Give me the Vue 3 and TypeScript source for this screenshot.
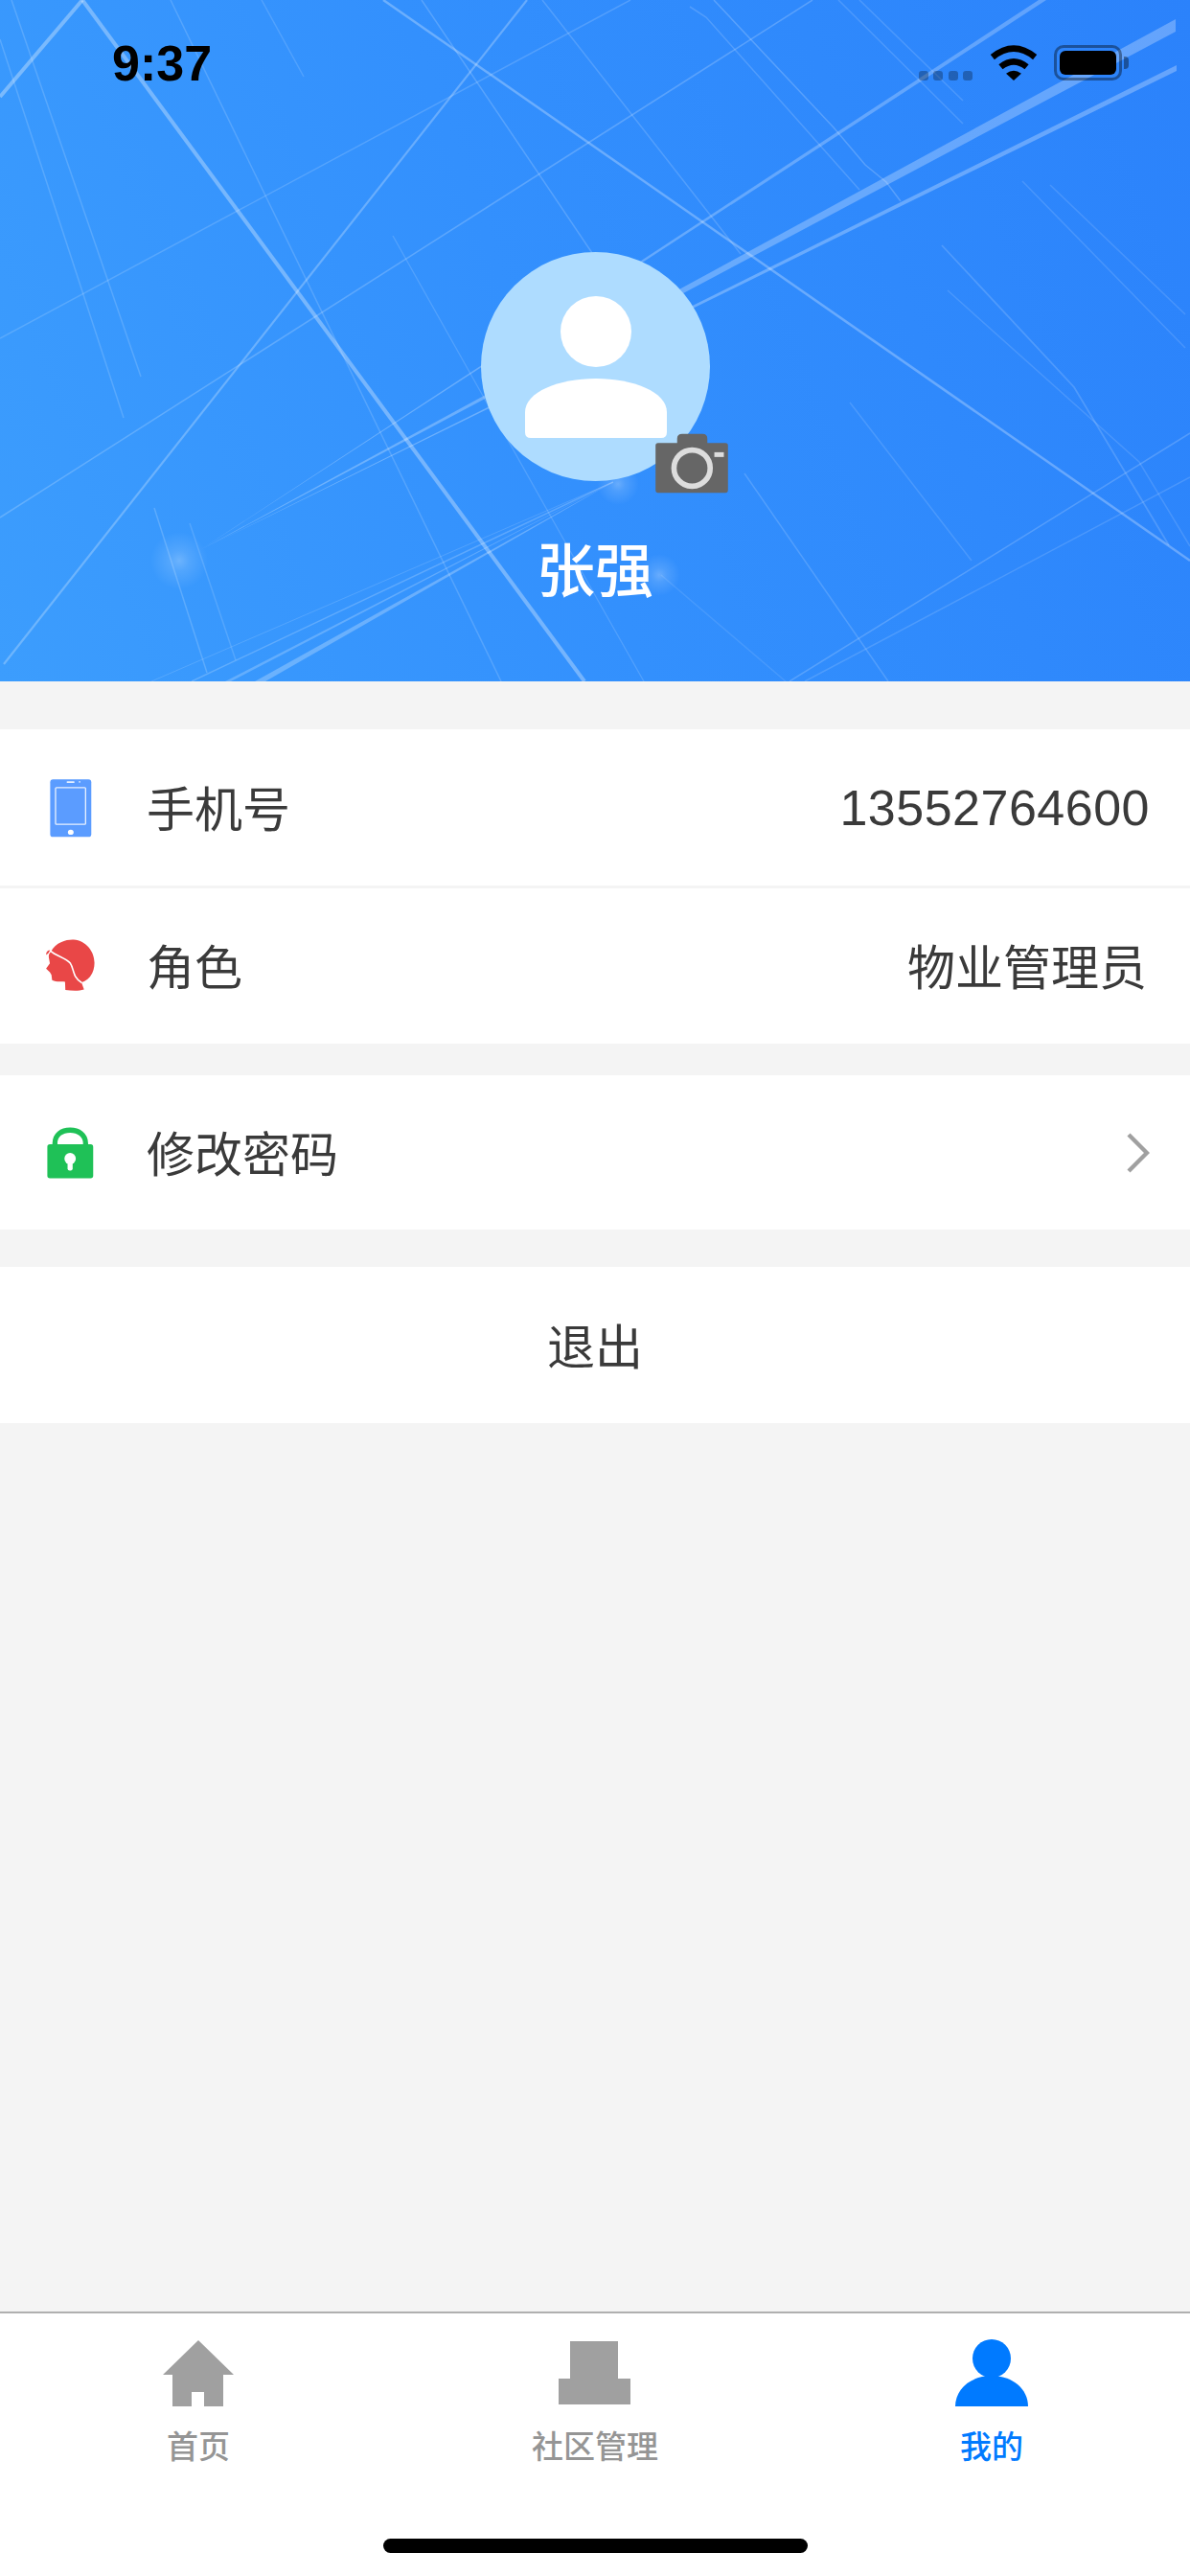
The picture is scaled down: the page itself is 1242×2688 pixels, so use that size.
<script setup lang="ts">
interface Streak {
  d: string;
  w: number;
  o: number;
}

interface Wedge {
  d: string;
  o: number;
}

interface Tab {
  label: string;
  active?: boolean;
}

// background streaks of the header picture, in page pixels
const streaks: Streak[] = [
  { d: "M86 0L610 711", w: 4, o: 0.32 },
  { d: "M86 0L0 101", w: 4, o: 0.33 },
  { d: "M0 353L658 0", w: 1.5, o: 0.16 },
  { d: "M400 0L1242 585", w: 2.5, o: 0.28 },
  { d: "M550 0L4 693", w: 2.2, o: 0.26 },
  { d: "M0 540L848 0", w: 1.5, o: 0.2 },
  { d: "M640 503L158 711", w: 1, o: 0.14 },
  { d: "M640 503L200 711", w: 1.5, o: 0.2 },
  { d: "M0 41L129 436", w: 1.5, o: 0.16 },
  { d: "M12 0L147 393", w: 1.5, o: 0.16 },
  { d: "M178 0L523 711", w: 1.5, o: 0.16 },
  { d: "M273 0L317 80", w: 1.5, o: 0.14 },
  { d: "M440 0L618 264", w: 1.5, o: 0.18 },
  { d: "M566 0L773 265", w: 1.5, o: 0.16 },
  { d: "M745 0L870 133L903 172L925 190L940 210", w: 1.5, o: 0.2 },
  { d: "M720 7L737 18L897 198", w: 1.5, o: 0.16 },
  { d: "M875 0L1005 129", w: 1.5, o: 0.14 },
  { d: "M897 0L1005 105", w: 1.5, o: 0.14 },
  { d: "M1067 189L1237 363", w: 1.5, o: 0.13 },
  { d: "M1096 193L1237 328", w: 1.5, o: 0.13 },
  { d: "M983 256L1121 404L1220 569", w: 1.8, o: 0.16 },
  { d: "M989 303L1189 482L1242 570", w: 1.5, o: 0.13 },
  { d: "M887 420L1014 585", w: 1.5, o: 0.13 },
  { d: "M777 494L927 711", w: 1.5, o: 0.16 },
  { d: "M410 246L630 637L672 711", w: 1.3, o: 0.15 },
  { d: "M161 530L216 702", w: 1.5, o: 0.18 },
  { d: "M198 546L246 689", w: 1.5, o: 0.14 },
  { d: "M1242 452L824 711", w: 1.5, o: 0.18 },
  { d: "M1242 498L840 711", w: 1.5, o: 0.14 },
  { d: "M690 600L820 711", w: 1.5, o: 0.1 },
];

// the streaks that widen away from a glow
const wedges: Wedge[] = [
  { d: "M207 575L1227 20V33Z", o: 0.27 },
  { d: "M213 572L1228 68V74Z", o: 0.28 },
  { d: "M207 575L1084 0H1092Z", o: 0.25 },
  { d: "M640 503L266 711H277Z", o: 0.26 },
  { d: "M640 503L235 711H241Z", o: 0.22 },
];

const tabs: Tab[] = [
  { label: "首页" },
  { label: "社区管理" },
  { label: "我的", active: true },
];
</script>

<template>
  <div class="page">
    <header class="hero">
      <svg class="streaks" viewBox="0 0 1242 711" preserveAspectRatio="none">
        <defs>
          <radialGradient id="glow">
            <stop offset="0" stop-color="#fff" stop-opacity="0.26" />
            <stop offset="0.35" stop-color="#fff" stop-opacity="0.13" />
            <stop offset="1" stop-color="#fff" stop-opacity="0" />
          </radialGradient>
        </defs>
        <path
          v-for="s in streaks"
          :key="s.d"
          :d="s.d"
          fill="none"
          stroke="#fff"
          :stroke-width="s.w"
          :stroke-opacity="s.o"
        />
        <path v-for="w in wedges" :key="w.d" :d="w.d" fill="#fff" :fill-opacity="w.o" />
        <circle cx="187" cy="585" r="30" fill="url(#glow)" />
        <circle cx="688" cy="600" r="22" fill="url(#glow)" />
        <circle cx="645" cy="505" r="22" fill="url(#glow)" />
      </svg>

      <div class="status">
        <span class="clock">9:37</span>
        <div class="status-icons">
          <div class="signal"><i /><i /><i /><i /></div>
          <svg class="wifi" viewBox="395 80 150 112">
            <path d="M403 118Q470 64 537 118" fill="none" stroke="#000" stroke-width="20" />
            <path d="M429 149Q470 116 511 149" fill="none" stroke="#000" stroke-width="20" />
            <path d="M446 170Q470 152 494 170L470 192Z" fill="#000" />
          </svg>
          <div class="battery"><div class="battery-fill" /></div>
          <div class="battery-cap" />
        </div>
      </div>

      <div class="avatar">
        <svg class="avatar-person" viewBox="0 0 150 150">
          <circle cx="75" cy="37" r="37" fill="#fff" />
          <path d="M1 121C1 100 36 86 75 86S149 100 149 121V142Q149 148 143 148H7Q1 148 1 142Z" fill="#fff" />
        </svg>
        <svg class="camera" viewBox="672 635 228 190">
          <path d="M740 666V652Q740 637 756 637H820Q835 637 835 652V666H892Q900 666 900 674V814Q900 823 892 823H680Q672 823 672 814V674Q672 666 680 666Z" fill="#666" />
          <circle cx="787" cy="745" r="57" fill="none" stroke="#ddd" stroke-width="17" />
          <rect x="857" y="695" width="30" height="15" fill="#ddd" />
        </svg>
      </div>
      <div class="name">张强</div>
    </header>

    <main class="content">
      <section class="group">
        <div class="row row-phone">
          <svg class="row-icon" viewBox="140 180 160 200">
            <rect x="156" y="190" width="130" height="182" rx="9" fill="#5b9cff" />
            <rect x="173" y="216" width="95" height="116" rx="3" fill="none" stroke="#fff" stroke-width="4" opacity="0.85" />
            <rect x="208" y="196" width="25" height="5" rx="2" fill="#fff" opacity="0.85" />
            <circle cx="249" cy="198" r="2.5" fill="#fff" opacity="0.85" />
            <ellipse cx="221" cy="357" rx="9" ry="8" fill="#fff" />
          </svg>
          <span class="label">手机号</span>
          <span class="value value-num">13552764600</span>
        </div>
        <div class="row row-role">
          <svg class="row-icon" viewBox="140 680 160 200">
            <path d="M158 735C175 704 208 696 230 697C270 700 296 735 296 770C296 800 280 825 255 832L263 854C245 860 225 858 204 856L203 830C190 828 175 832 162 825L160 808L155 800L143 788L155 772L152 755C150 745 153 740 158 735Z" fill="#e94747" />
            <path d="M143 745C143 735 148 730 156 730L150 740Z" fill="#e94747" />
            <path d="M156 731C175 750 205 752 220 772C232 790 226 815 256 833" fill="none" stroke="#fff" stroke-width="5" />
          </svg>
          <span class="label">角色</span>
          <span class="value">物业管理员</span>
        </div>
      </section>

      <section class="group group-password">
        <div class="row row-password">
          <svg class="row-icon" viewBox="140 1262 160 200">
            <path d="M171 1340V1332C171 1305 192 1290 219 1290S268 1305 268 1332V1340" fill="none" stroke="#1fc157" stroke-width="16" />
            <rect x="147" y="1335" width="145" height="107" rx="8" fill="#1fc157" />
            <circle cx="219" cy="1380" r="18" fill="#fff" />
            <rect x="211" y="1385" width="16" height="33" rx="7" fill="#fff" />
          </svg>
          <span class="label">修改密码</span>
          <svg class="chevron" viewBox="0 0 24 42">
            <path d="M2 2L21 21L2 40" fill="none" stroke="#a0a0a0" stroke-width="4.4" />
          </svg>
        </div>
      </section>

      <button class="logout">退出</button>
    </main>

    <footer class="tabbar">
      <div class="tabs">
        <div v-for="(tab, i) in tabs" :key="tab.label" class="tab" :class="{ active: tab.active }">
          <svg class="tab-icon" viewBox="0 0 80 72">
            <path v-if="i === 0" d="M40 1L77 37H66V70H46V55H33V70H13V37H3Z" />
            <path v-else-if="i === 1" d="M14 2H64V41H77V68H2V41H14Z" />
            <template v-else>
              <circle cx="40" cy="20" r="20" />
              <path d="M2 70C2 52 18 38 40 38S78 52 78 70Z" />
            </template>
          </svg>
          <span class="tab-label">{{ tab.label }}</span>
        </div>
      </div>
      <div class="home-bar" />
    </footer>
  </div>
</template>

<style scoped>
.page {
  width: 1242px;
  height: 2688px;
  display: flex;
  flex-direction: column;
  background: #f4f4f4;
  overflow: hidden;
  font-family: "Liberation Sans", "Noto Sans CJK SC", sans-serif;
  color: #3a3a3a;
}

.hero {
  position: relative;
  height: 711px;
  flex: none;
  display: flex;
  flex-direction: column;
  align-items: center;
  background: linear-gradient(70deg, #3c9dfd 0%, #3390fd 45%, #2b82fb 100%);
}

.streaks {
  position: absolute;
  inset: 0;
  width: 100%;
  height: 100%;
}

.status {
  position: relative;
  width: 100%;
  height: 263px;
  flex: none;
  box-sizing: border-box;
  padding: 36px 64px 0 117px;
  display: flex;
  justify-content: space-between;
  align-items: flex-start;
}

.clock {
  font-size: 52px;
  line-height: 60px;
  font-weight: 700;
  color: #000;
}

.status-icons {
  display: flex;
  align-items: flex-start;
  margin-top: 11px;
}

.signal {
  display: flex;
  gap: 5.5px;
  margin-top: 27px;
  margin-right: 18px;
}

.signal i {
  width: 10px;
  height: 10px;
  border-radius: 3px;
  background: rgba(0, 0, 0, 0.28);
}

.wifi {
  width: 50px;
  height: 37px;
  margin-right: 17px;
}

.battery {
  width: 71px;
  height: 37px;
  box-sizing: border-box;
  border: 3px solid rgba(0, 0, 0, 0.38);
  border-radius: 10px;
  padding: 3px;
}

.battery-fill {
  width: 100%;
  height: 100%;
  background: #000;
  border-radius: 6px;
}

.battery-cap {
  width: 5px;
  height: 13px;
  margin: 12px 0 0 2px;
  border-radius: 0 4px 4px 0;
  background: rgba(0, 0, 0, 0.38);
}

.avatar {
  position: relative;
  width: 239px;
  height: 239px;
  flex: none;
  margin-left: 1px;
  border-radius: 50%;
  background: #aedcff;
  display: flex;
  justify-content: center;
  padding-top: 46px;
  box-sizing: border-box;
}

.avatar-person {
  width: 150px;
  height: 150px;
}

.camera {
  position: absolute;
  left: 182px;
  top: 189px;
  width: 76px;
  height: 63px;
}

.name {
  position: relative;
  margin-top: 47px;
  font-size: 61px;
  line-height: 86px;
  font-weight: 500;
  font-family: "Noto Sans CJK SC", sans-serif;
  color: #fff;
}

.content {
  flex: 1;
  padding-top: 50px;
  display: flex;
  flex-direction: column;
}

.group {
  display: flex;
  flex-direction: column;
  gap: 3px;
}

.group-password {
  margin-top: 33px;
}

.row {
  height: 163px;
  background: #fff;
  display: flex;
  align-items: center;
  padding: 0 45px 0 47px;
}

.row-role {
  height: 162px;
}

.row-password {
  height: 161px;
}

.row-icon {
  width: 53px;
  height: 66px;
  margin-right: 53px;
  flex: none;
}

.label,
.value {
  font-size: 50px;
  padding-bottom: 4px;
  font-family: "Noto Sans CJK SC", sans-serif;
}

.value {
  margin-left: auto;
}

.value-num {
  font-family: "Liberation Sans", sans-serif;
  font-size: 52px;
  letter-spacing: 0.5px;
  margin-right: -3px;
  padding-bottom: 0;
}

.chevron {
  width: 24px;
  height: 42px;
  margin-left: auto;
  margin-right: -3px;
}

.logout {
  margin-top: 39px;
  height: 163px;
  flex: none;
  border: none;
  background: #fff;
  font-size: 50px;
  font-family: "Noto Sans CJK SC", sans-serif;
  color: #3a3a3a;
  padding: 0 0 4px;
}

.tabbar {
  height: 276px;
  flex: none;
  box-sizing: border-box;
  border-top: 2px solid #b0b0b0;
  background: #fff;
  display: flex;
  flex-direction: column;
  align-items: center;
}

.tabs {
  width: 100%;
  display: grid;
  grid-template-columns: repeat(3, 1fr);
  padding-top: 27px;
}

.tab {
  display: flex;
  flex-direction: column;
  align-items: center;
  fill: #a0a0a0;
  color: #959595;
}

.tab.active {
  fill: #007aff;
  color: #007aff;
}

.tab-icon {
  width: 80px;
  height: 72px;
}

.tab-label {
  margin-top: 14px;
  font-size: 33px;
  line-height: 48px;
  font-weight: 500;
  font-family: "Noto Sans CJK SC", sans-serif;
}

.home-bar {
  width: 443px;
  height: 15px;
  margin-top: 74px;
  border-radius: 8px;
  background: #000;
}
</style>
